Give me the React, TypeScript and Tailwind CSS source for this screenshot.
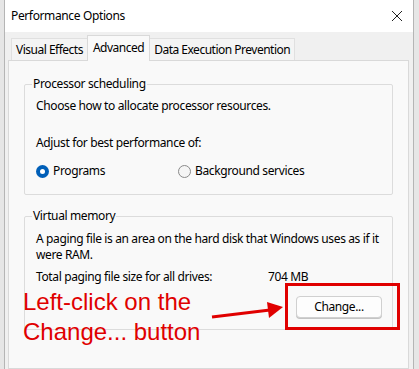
import React from "react";

export default function App() {
  const font = { fontFamily: '"Noto Sans", "Open Sans", sans-serif' };
  return (
    <div className="w-[419px] h-[369px] bg-[#e6e6e6] overflow-hidden relative" style={font}>
      <div className="ml-[4px] w-[410px] h-[369px] bg-[#f0f0f0] border-l border-r border-[#b5b5b5] flex flex-col text-[12px] tracking-[-0.37px] text-black">
        {/* Title bar */}
        <div className="h-[32px] bg-white flex items-center justify-between pl-[6px] pr-[6px] shrink-0">
          <span className="text-[12px] leading-none">Performance Options</span>
          <svg width="12" height="12" viewBox="0 0 12 12" className="mr-[4px]">
            <path d="M1 1 L11 11 M11 1 L1 11" stroke="#222" strokeWidth="1" />
          </svg>
        </div>
        {/* Tabs */}
        <div className="flex items-end pl-[6px] h-[28px] shrink-0 tracking-[-0.5px]">
          <div className="h-[22px] px-[4px] flex items-center bg-[#f4f4f4] border-t border-l border-[#e0e0e0] text-[12px]">Visual Effects</div>
          <div className="h-[26px] px-[5px] flex items-start pt-[3px] bg-[#f9f9f9] border-t border-l border-r border-[#d9d9d9] text-[12px] -mb-px relative z-10">Advanced</div>
          <div className="h-[22px] px-[4px] flex items-center bg-[#f4f4f4] border-t border-r border-[#e0e0e0] text-[12px]">Data Execution Prevention</div>
        </div>
        {/* Panel */}
        <div className="flex-1 ml-[3px] mr-[4px] bg-[#f9f9f9] border border-[#d9d9d9] px-[15px] pt-[16px]">
          {/* Processor scheduling */}
          <fieldset className="border border-[#dcdcdc] rounded-[2px] px-[11px] pb-[15px] m-0">
            <legend className="px-[1px] ml-[-4px] text-[12px] leading-[14px]">Processor scheduling</legend>
            <div className="mt-[7px] leading-[16px]">Choose how to allocate processor resources.</div>
            <div className="mt-[21px] leading-[16px]">Adjust for best performance of:</div>
            <div className="mt-[12px] flex items-center leading-[16px]">
              <div className="flex items-center w-[142px]">
                <span className="w-[13px] h-[13px] rounded-full bg-[#005fb8] flex items-center justify-center mr-[4px]">
                  <span className="w-[5px] h-[5px] rounded-full bg-white" />
                </span>
                <span>Programs</span>
              </div>
              <div className="flex items-center">
                <span className="w-[13px] h-[13px] rounded-full border border-[#8a8a8a] bg-[#f5f5f5] mr-[4px]" />
                <span>Background services</span>
              </div>
            </div>
          </fieldset>
          {/* Virtual memory */}
          <fieldset className="mt-[14px] border border-[#dcdcdc] rounded-[2px] px-[11px] pb-[11px] m-0">
            <legend className="px-[1px] ml-[-4px] text-[12px] leading-[14px]">Virtual memory</legend>
            <div className="mt-[8px] leading-[16px] whitespace-nowrap">
              <div>A paging file is an area on the hard disk that Windows uses as if it</div>
              <div>were RAM.</div>
            </div>
            <div className="mt-[6px] flex leading-[16px]">
              <span className="w-[232px]">Total paging file size for all drives:</span>
              <span>704 MB</span>
            </div>
            <div className="mt-[11px] flex justify-end mr-[-1px]">
              <div className="w-[86px] h-[22px] bg-[#fdfdfd] border border-[#d0d0d0] rounded-[4px] flex items-center justify-center shadow-[0_1px_0_#c4c4c4]">
                Change...
              </div>
            </div>
          </fieldset>
        </div>
      </div>
      {/* Annotation overlay */}
      <div
        className="absolute left-[23px] top-[287px] text-[#e00000] text-[24px] leading-[30px]"
        style={{ fontFamily: '"Liberation Sans", Arial, sans-serif' }}
      >
        <div>Left-click on the</div>
        <div>Change... button</div>
      </div>
      <div className="absolute left-[285px] top-[283px] w-[115px] h-[47px] border-[3px] border-[#e00000]" />
      <svg className="absolute left-[210px] top-[298px]" width="76" height="24" viewBox="0 0 76 24">
        <line x1="2" y1="19" x2="60" y2="12" stroke="#e00000" strokeWidth="3" />
        <polygon points="73,9 57,4 59,20" fill="#e00000" />
      </svg>
    </div>
  );
}
